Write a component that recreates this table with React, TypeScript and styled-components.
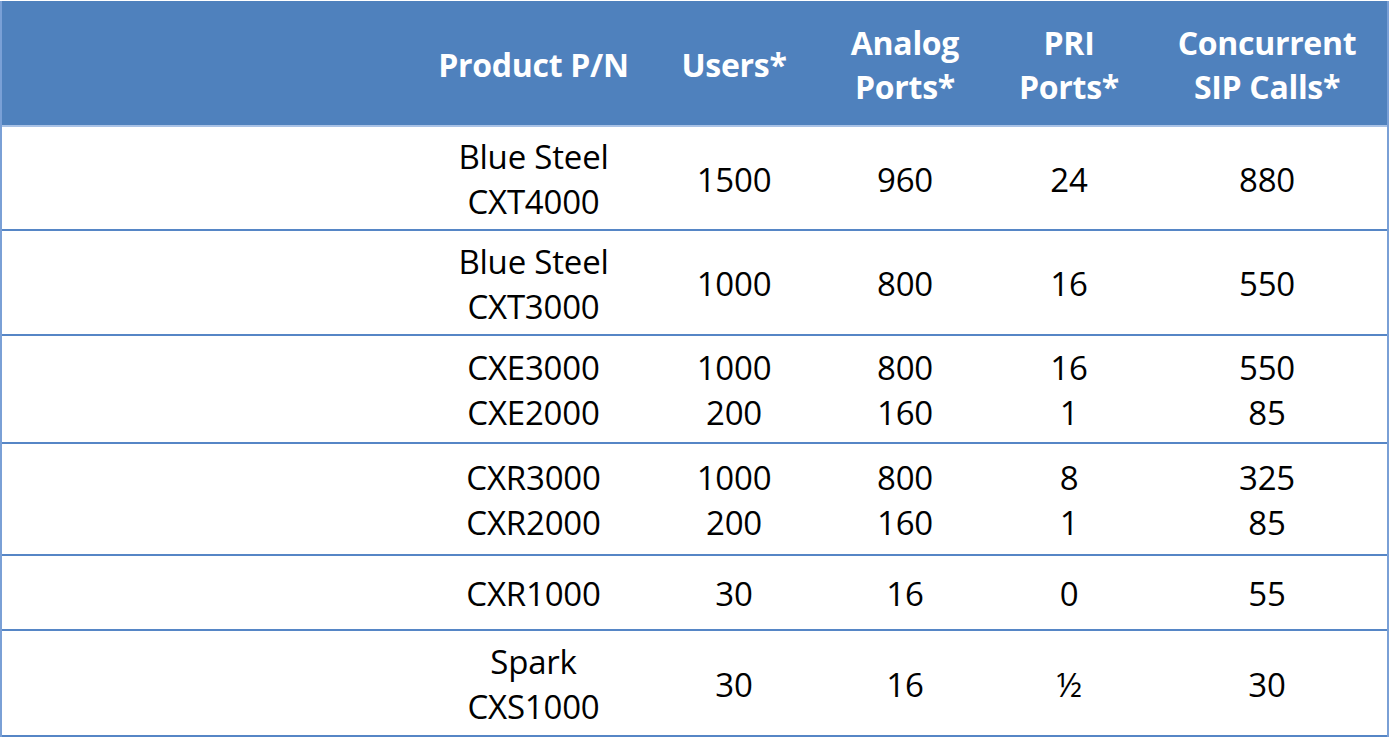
import React from 'react';
import styled, { createGlobalStyle } from 'styled-components';

const GlobalStyle = createGlobalStyle`
  html, body {
    margin: 0;
    padding: 0;
    background: #ffffff;
  }
  body {
    font-family: 'Open Sans', 'Noto Sans', 'Liberation Sans', sans-serif;
  }
`;

const COLUMNS = '413px 237px 164px 178px 150px 246px';

const Page = styled.div`
  width: 1391px;
  height: 752px;
  padding: 1px 0 0 0;
  box-sizing: border-box;
`;

const Table = styled.div`
  width: 1389px;
  border-left: 2px solid #7aa0d6;
  border-right: 2px solid #7aa0d6;
  box-sizing: border-box;
`;

const HeaderRow = styled.div`
  display: grid;
  grid-template-columns: ${COLUMNS};
  height: 126px;
  background: #4f81bd;
  border-bottom: 2px solid #a9c2e6;
  box-sizing: border-box;
`;

const HeaderCell = styled.div`
  display: flex;
  align-items: center;
  justify-content: center;
  text-align: center;
  color: #ffffff;
  font-weight: 700;
  font-size: 32px;
  line-height: 44px;
  letter-spacing: -0.3px;
  padding-top: 3px;
`;

const Row = styled.div<{ $h: number }>`
  display: grid;
  grid-template-columns: ${COLUMNS};
  height: ${(p) => p.$h}px;
  border-bottom: 2px solid #5686c6;
  box-sizing: border-box;
`;

const Cell = styled.div`
  display: flex;
  flex-direction: column;
  align-items: center;
  justify-content: center;
  text-align: center;
  color: #000000;
  font-size: 33px;
  line-height: 45px;
  letter-spacing: -0.2px;
  padding-top: 2px;
`;

type RowData = { h: number; cells: string[][] };

const headers: string[][] = [
  [],
  ['Product P/N'],
  ['Users*'],
  ['Analog', 'Ports*'],
  ['PRI', 'Ports*'],
  ['Concurrent', 'SIP Calls*'],
];

const rows: RowData[] = [
  { h: 104, cells: [[], ['Blue Steel', 'CXT4000'], ['1500'], ['960'], ['24'], ['880']] },
  { h: 105, cells: [[], ['Blue Steel', 'CXT3000'], ['1000'], ['800'], ['16'], ['550']] },
  {
    h: 108,
    cells: [[], ['CXE3000', 'CXE2000'], ['1000', '200'], ['800', '160'], ['16', '1'], ['550', '85']],
  },
  {
    h: 112,
    cells: [[], ['CXR3000', 'CXR2000'], ['1000', '200'], ['800', '160'], ['8', '1'], ['325', '85']],
  },
  { h: 75, cells: [[], ['CXR1000'], ['30'], ['16'], ['0'], ['55']] },
  { h: 106, cells: [[], ['Spark', 'CXS1000'], ['30'], ['16'], ['½'], ['30']] },
];

export default function App() {
  return (
    <>
      <GlobalStyle />
      <Page>
        <Table>
          <HeaderRow>
            {headers.map((lines, i) => (
              <HeaderCell key={i}>
                <div>
                  {lines.map((l, j) => (
                    <div key={j}>{l}</div>
                  ))}
                </div>
              </HeaderCell>
            ))}
          </HeaderRow>
          {rows.map((r, i) => (
            <Row key={i} $h={r.h}>
              {r.cells.map((lines, j) => (
                <Cell key={j}>
                  {lines.map((l, k) => (
                    <div key={k}>{l}</div>
                  ))}
                </Cell>
              ))}
            </Row>
          ))}
        </Table>
      </Page>
    </>
  );
}
